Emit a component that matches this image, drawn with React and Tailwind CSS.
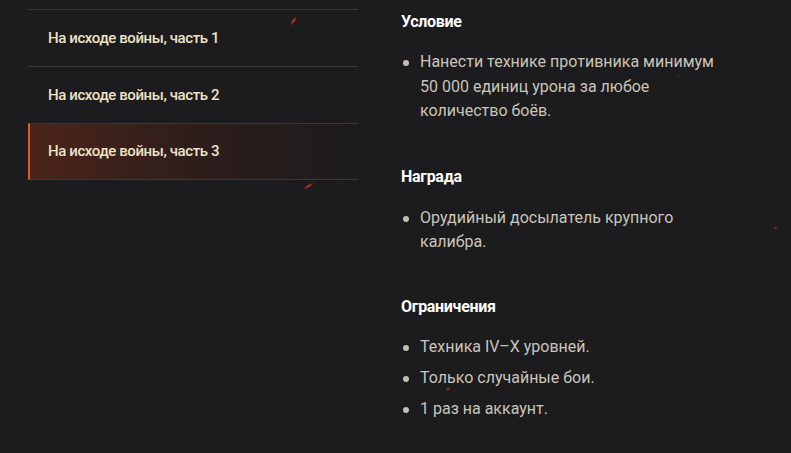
import React from "react";

const parts = ["На исходе войны, часть 1", "На исходе войны, часть 2", "На исходе войны, часть 3"];

function Spark({ className }) {
  return <div className={`absolute rounded-full bg-gradient-to-r from-transparent via-[#e0322a] to-transparent ${className}`} />;
}

function Bullet({ children }) {
  return (
    <li className="flex items-start">
      <span className="mt-[10px] mr-[11px] ml-[2px] h-[6px] w-[6px] shrink-0 rounded-full bg-[#c4c0b4]" />
      <span>{children}</span>
    </li>
  );
}

export default function App() {
  return (
    <div
      className="relative flex h-[453px] w-[791px] overflow-hidden bg-[#1c1b1d]"
      style={{ fontFamily: "Roboto, 'Noto Sans', sans-serif" }}
    >
      {/* искры на фоне */}
      <Spark className="left-[288px] top-[20px] h-[2px] w-[11px] -rotate-[55deg]" />
      <Spark className="left-[302px] top-[185px] h-[2px] w-[13px] -rotate-[30deg]" />
      <Spark className="left-[773px] top-[227px] h-[2px] w-[5px] -rotate-[30deg] opacity-60" />
      <Spark className="left-[445px] top-[388px] h-[2px] w-[6px] -rotate-[35deg] opacity-70" />
      <Spark className="left-[675px] top-[76px] h-[1px] w-[6px] -rotate-[50deg] opacity-40" />

      <div className="ml-[28px] mt-[9px] w-[330px] shrink-0">
        {parts.map((p, i) => {
          const active = i === 2;
          return (
            <div
              key={p}
              className={`flex h-[57px] items-center border-t border-[#39383a] ${
                active
                  ? "border-b border-l-2 border-l-[#e0582a] bg-gradient-to-r from-[#4b2418] via-[#2e1d1b] to-transparent pl-[18px]"
                  : "pl-[20px]"
              }`}
            >
              <span className="text-[15px] font-medium tracking-[-0.4px] text-[#ece2c6]">{p}</span>
            </div>
          );
        })}
      </div>

      <div className="ml-[43px] pt-[10px] text-[16px] leading-[24.5px] text-[#c9c5ba]">
        <h3 className="text-[16px] font-bold leading-[24px] tracking-[-0.3px] text-white">Условие</h3>
        <ul className="mt-[16px] w-[318px]">
          <Bullet>
            Нанести технике противника минимум 50&nbsp;000 единиц урона за любое количество боёв.
          </Bullet>
        </ul>

        <h3 className="mt-[41px] text-[16px] font-bold leading-[24px] tracking-[-0.3px] text-white">Награда</h3>
        <ul className="mt-[17px] w-[318px]">
          <Bullet>Орудийный досылатель крупного калибра.</Bullet>
        </ul>

        <h3 className="mt-[40px] text-[16px] font-bold leading-[24px] tracking-[-0.3px] text-white">Ограничения</h3>
        <ul className="mt-[16px] flex flex-col gap-[6.5px]">
          <Bullet>Техника IV–X уровней.</Bullet>
          <Bullet>Только случайные бои.</Bullet>
          <Bullet>1 раз на аккаунт.</Bullet>
        </ul>
      </div>
    </div>
  );
}
